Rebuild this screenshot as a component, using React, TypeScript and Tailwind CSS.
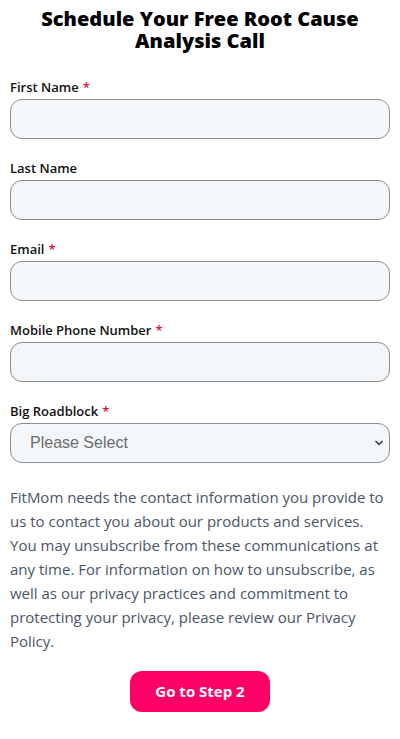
import { ChevronDown } from "lucide-react";

const fields = [
  { label: "First Name", required: true },
  { label: "Last Name", required: false },
  { label: "Email", required: true },
  { label: "Mobile Phone Number", required: true },
];

const consentLines = [
  "FitMom needs the contact information you provide to",
  "us to contact you about our products and services.",
  "You may unsubscribe from these communications at",
  "any time. For information on how to unsubscribe, as",
  "well as our privacy practices and commitment to",
  "protecting your privacy, please review our Privacy",
  "Policy.",
];

function Label({ text, required }: { text: string; required: boolean }) {
  return (
    <label className="block text-[13px] leading-[20px] font-semibold text-[#111]">
      {text}
      {required && <span className="ml-[4px] text-[#e0103a]">*</span>}
    </label>
  );
}

function App() {
  return (
    <main className="min-h-screen bg-white px-[10px] pt-[8px] font-['Open_Sans',sans-serif]">
      <h1 className="text-center text-[20px] leading-[22px] font-extrabold text-black">
        Schedule Your Free Root Cause
        <br />
        Analysis Call
      </h1>

      <form className="mt-[25px] flex flex-col gap-[19px]">
        {fields.map((field) => (
          <div key={field.label} className="flex flex-col gap-[2px]">
            <Label text={field.label} required={field.required} />
            <input
              type="text"
              className="h-[40px] w-full rounded-[12px] border border-[#8c8c8c] bg-[#f4f7fa] px-[14px] outline-none"
            />
          </div>
        ))}

        <div className="flex flex-col gap-[2px]">
          <Label text="Big Roadblock" required />
          <div className="relative">
            <select
              defaultValue=""
              className="h-[40px] w-full appearance-none rounded-[12px] border border-[#8c8c8c] bg-[#f4f7fa] pl-[19px] font-['Liberation_Sans',sans-serif] text-[16px] text-[#6d6d6d] outline-none"
            >
              <option value="">Please Select</option>
            </select>
            <ChevronDown
              size={12}
              strokeWidth={3.5}
              className="pointer-events-none absolute right-[5px] top-[14px] text-[#444]"
            />
          </div>
        </div>
      </form>

      <p className="mt-[22px] text-[15px] leading-[24px] whitespace-nowrap text-[#4a5568]">
        {consentLines.map((line, i) => (
          <span key={i} className="block">
            {line}
          </span>
        ))}
      </p>

      <div className="mt-[18px] flex justify-center">
        <button
          type="button"
          className="h-[41px] w-[140px] rounded-[12px] bg-[#ff0066] text-[15px] font-bold text-white"
        >
          Go to Step 2
        </button>
      </div>
    </main>
  );
}

export default App;
